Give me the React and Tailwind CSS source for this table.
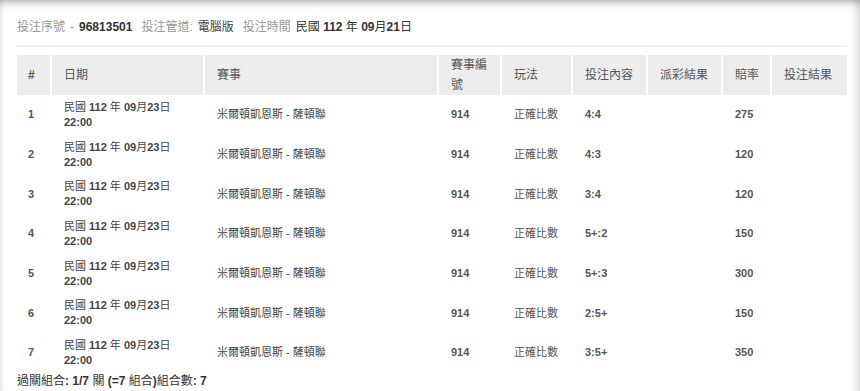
import React from 'react';

const FONT = "font-['Liberation_Sans','Noto_Sans_CJK_TC',sans-serif]";

// render CJK runs in normal weight, latin runs keep the bold of the parent
const Mixed = ({ text }) => {
    const parts = text.split(/([\u3000-\u9fff\uff00-\uffef]+)/).filter(Boolean);
    return (
        <>
            {parts.map((p, i) =>
                /[\u3000-\u9fff\uff00-\uffef]/.test(p)
                    ? <span key={i} className="font-normal">{p}</span>
                    : <span key={i}>{p}</span>
            )}
        </>
    );
};

const bets = [
    { no: 1, pick: '4:4', odds: 275 },
    { no: 2, pick: '4:3', odds: 120 },
    { no: 3, pick: '3:4', odds: 120 },
    { no: 4, pick: '5+:2', odds: 150 },
    { no: 5, pick: '5+:3', odds: 300 },
    { no: 6, pick: '2:5+', odds: 150 },
    { no: 7, pick: '3:5+', odds: 350 },
];

const App = () => {
    return (
        <div className={`w-[860px] h-[391px] overflow-hidden bg-white ${FONT} shadow-[inset_0_8px_7px_-5px_rgba(0,0,0,0.28),inset_5px_0_5px_-4px_rgba(0,0,0,0.12),inset_-11px_0_7px_-7px_rgba(0,0,0,0.14)]`}>
            <div className="pl-[16px] pr-[13px] pt-[18px]">
                {/* bet summary */}
                <div className="text-[12px] leading-[18px] text-[#333] flex items-center pl-px">
                    <span className="text-[#999]">投注序號</span>
                    <span className="text-[#999] ml-[5px]">-</span>
                    <span className="font-bold ml-[5px]">96813501</span>
                    <span className="text-[#999] ml-[9px]">投注管道:</span>
                    <span className="ml-[5px] text-[#444]">電腦版</span>
                    <span className="text-[#999] ml-[9px]">投注時間</span>
                    <span className="font-bold ml-[5px]"><Mixed text="民國 112 年 09月21日" /></span>
                </div>
                <div className="mt-[9px] h-[2px] bg-[#f0f0f0]" />

                <table className="mt-[8px] ml-px w-[830px] table-fixed border-separate border-spacing-0 text-left">
                    <colgroup>
                        <col className="w-[35px]" />
                        <col className="w-[153px]" />
                        <col className="w-[234px]" />
                        <col className="w-[63px]" />
                        <col className="w-[71px]" />
                        <col className="w-[75px]" />
                        <col className="w-[75px]" />
                        <col className="w-[49px]" />
                        <col className="w-[75px]" />
                    </colgroup>
                    <thead>
                        <tr className="h-[38px] bg-[#ededed] text-[12px] leading-[20px] text-[#555] font-normal">
                            <th className="pl-[11px] pr-1 font-bold border-r-2 border-white">#</th>
                            <th className="px-3 font-normal border-r-2 border-white">日期</th>
                            <th className="px-3 font-normal border-r-2 border-white">賽事</th>
                            <th className="px-3 font-normal border-r-2 border-white">賽事編號</th>
                            <th className="px-3 font-normal border-r-2 border-white">玩法</th>
                            <th className="px-3 font-normal border-r-2 border-white">投注內容</th>
                            <th className="px-3 font-normal border-r-2 border-white">派彩結果</th>
                            <th className="pl-3 pr-0 font-normal whitespace-nowrap border-r-2 border-white">賠率</th>
                            <th className="px-3 font-normal">投注結果</th>
                        </tr>
                    </thead>
                    <tbody className="text-[11px] leading-[15px] text-[#555] font-bold">
                        {bets.map((b) => (
                            <tr key={b.no} className="h-[39.7px]">
                                <td className="pl-[11px]">{b.no}</td>
                                <td className="px-3 text-[#444]">
                                    <div><Mixed text="民國 112 年 09月23日" /></div>
                                    <div>22:00</div>
                                </td>
                                <td className="px-3 font-normal text-[#444]">米爾頓凱恩斯 - 薩頓聯</td>
                                <td className="px-3">914</td>
                                <td className="px-3 font-normal">正確比數</td>
                                <td className="px-3">{b.pick}</td>
                                <td className="px-3"></td>
                                <td className="pl-3 pr-0">{b.odds}</td>
                                <td className="px-3"></td>
                            </tr>
                        ))}
                    </tbody>
                </table>

                <div className="pl-px text-[12px] leading-[16px] font-bold text-[#333]">
                    <Mixed text="過關組合: 1/7 關 (=7 組合)組合數: 7" />
                </div>
            </div>
        </div>
    );
};

export default App;
